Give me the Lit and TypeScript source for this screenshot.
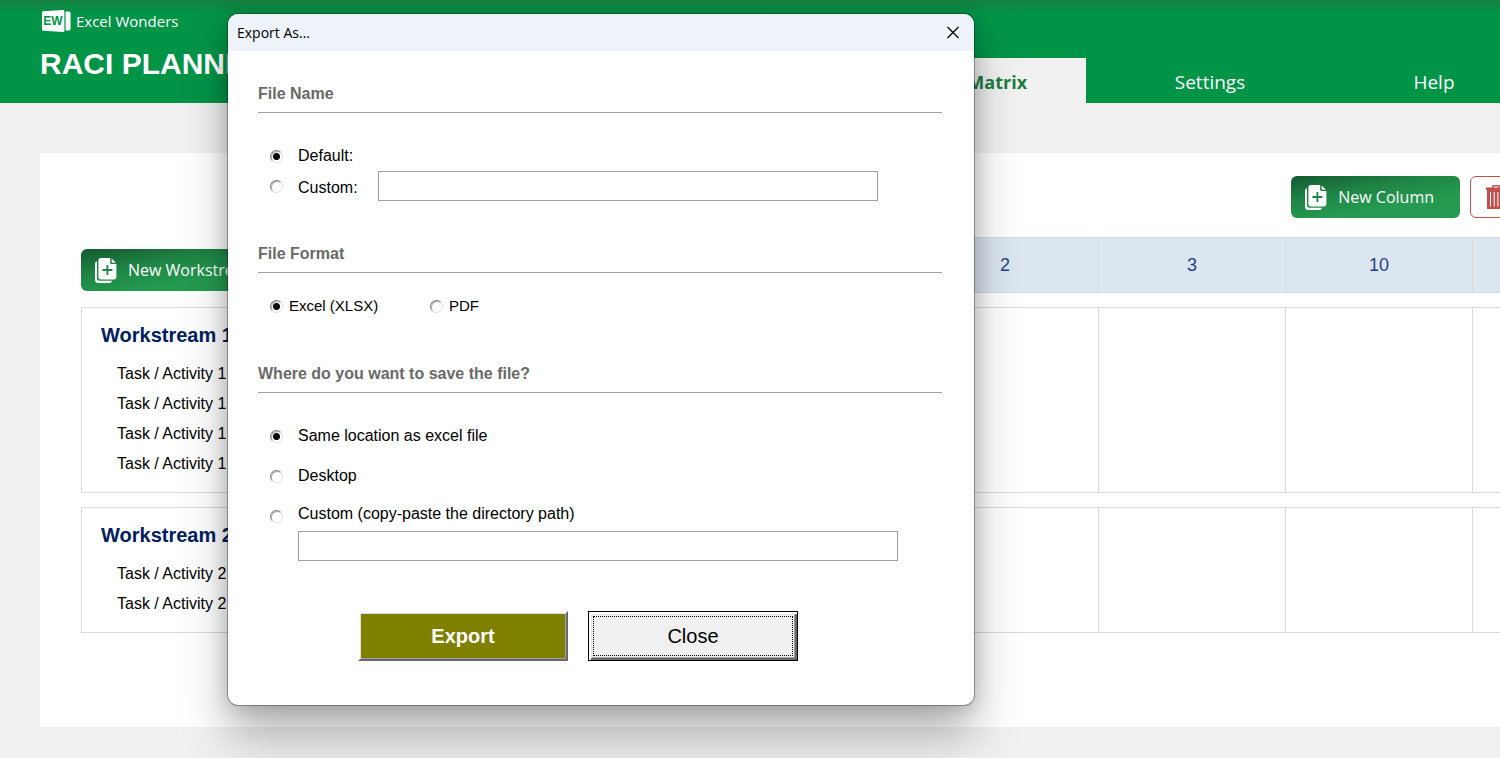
import { LitElement, html, css } from "lit";
import { customElement, state } from "lit/decorators.js";

interface Workstream {
  name: string;
  tasks: string[];
}

const columns = ["1", "2", "3", "10", ""];

const workstreams: Workstream[] = [
  {
    name: "Workstream 1",
    tasks: ["Task / Activity 1", "Task / Activity 1", "Task / Activity 1", "Task / Activity 1"],
  },
  { name: "Workstream 2", tasks: ["Task / Activity 2", "Task / Activity 2"] },
];

const addIcon = html`<svg viewBox="0 0 22 25" width="22" height="25" aria-hidden="true">
  <path fill="#fff" d="M0 5.500Q0 3.500 2 3.200V20.500Q2 22.800 4.400 22.800H17Q16.600 25 14.500 25H3.500Q0 25 0 21.500Z" />
  <path fill="#fff" d="M3.400 2.500Q3.400 0 6 0H15.200V4.800Q15.200 6 16.400 6H21.400V18.800Q21.400 21.400 18.800 21.400H6Q3.400 21.400 3.400 18.800Z" />
  <path fill="#fff" d="M16.600 0.600L20.900 4.700H17.400Q16.600 4.700 16.600 3.900Z" />
  <path stroke="#1d8443" stroke-width="1.800" d="M12.400 7V17M7.400 12H17.400" />
</svg>`;

@customElement("app-root")
export class AppRoot extends LitElement {
  @state() private naming = "default";
  @state() private format = "xlsx";
  @state() private location = "same";

  static styles = css`
    :host {
      display: block;
      position: relative;
      min-height: 100vh;
      overflow: hidden;
      background: #f1f1f1;
      color: #000;
      font-family: "Liberation Sans", Arial, sans-serif;
      font-size: 16px;
      line-height: 20px;
    }
    * {
      box-sizing: border-box;
    }
    .top {
      display: flex;
      height: 103px;
      background: linear-gradient(#17803f, #009447 14px);
      color: #fff;
    }
    .brand {
      flex: 0 0 862px;
      padding: 10px 0 0 40px;
    }
    .logo {
      display: flex;
      align-items: center;
      gap: 5px;
      height: 22px;
      padding-left: 1px;
      font: 15px/20px "Open Sans", "Noto Sans", sans-serif;
    }
    .title {
      margin: 14px 0 0;
      font-size: 30px;
      line-height: 36px;
    }
    .tabs {
      display: flex;
      align-items: flex-end;
    }
    .tab {
      flex: 0 0 224px;
      height: 45px;
      color: #fff;
      font: 19px/48px "Open Sans", "Noto Sans", sans-serif;
      text-align: center;
      text-decoration: none;
    }
    .tab.active {
      margin-right: 12px;
      background: #f1f1f1;
      color: #1d7c42;
      font-size: 18px;
      font-weight: 700;
    }
    .sheet {
      width: max-content;
      min-width: calc(100% - 40px);
      margin: 50px 0 31px 40px;
      padding: 23px 40px 94px 41px;
      background: #fff;
    }
    .inner {
      width: max-content;
    }
    .toolbar {
      display: flex;
      justify-content: flex-end;
      gap: 10px;
      margin-bottom: 19px;
    }
    .btn {
      display: flex;
      align-items: center;
      gap: 11px;
      height: 42px;
      padding: 0 26px 0 14px;
      border: 0;
      border-radius: 6px;
      background: linear-gradient(170deg, #14592f, #1f8545 35%, #24994f 65%);
      color: #fff;
      font: 16px/24px "Open Sans", "Noto Sans", sans-serif;
      white-space: nowrap;
    }
    .btn.danger {
      width: 190px;
      border: 1px solid #c0504d;
      background: #fff;
    }
    .matrix {
      border-collapse: separate;
      border-spacing: 0;
      table-layout: fixed;
      width: 1579px;
    }
    .matrix th,
    .matrix td {
      width: 187px;
      padding: 0;
      border: solid #d9d9d9;
      border-width: 1px 1px 1px 0;
    }
    .matrix .lead {
      width: 644px;
      padding-bottom: 2px;
      border: 0;
      vertical-align: bottom;
    }
    .matrix .col {
      height: 56px;
      background: #dce6f1;
      color: #1f4287;
      font-size: 18px;
      font-weight: 400;
    }
    .matrix .gap {
      height: 14px;
      border: 0;
    }
    .matrix .stream {
      padding: 14px 19px 13px;
      border-left-width: 1px;
      text-align: left;
      vertical-align: top;
      font-weight: 400;
    }
    .name {
      margin: 0 0 11px;
      color: #002060;
      font-size: 20px;
      line-height: 26px;
    }
    .tasks {
      margin: 0;
      padding: 0 0 0 16px;
      list-style: none;
      line-height: 30px;
    }
    .dialog {
      position: absolute;
      top: 14px;
      left: 228px;
      width: 746px;
      margin: 0;
      padding: 0;
      border: 0;
      border-radius: 10px;
      background: #fff;
      color: #000;
      box-shadow: 0 0 0 1px rgba(0, 0, 0, 0.3), 0 2px 20px rgba(0, 0, 0, 0.2), 0 32px 48px rgba(0, 0, 0, 0.28);
    }
    .bar {
      display: flex;
      align-items: center;
      justify-content: space-between;
      height: 37px;
      padding: 0 14px 0 9px;
      border-radius: 10px 10px 0 0;
      background: #eef3f9;
      font: 14px/20px "Open Sans", "Noto Sans", sans-serif;
    }
    .x {
      display: flex;
      padding: 0;
      border: 0;
      background: none;
    }
    .form {
      padding: 32px 32px 44px 30px;
    }
    .group {
      min-width: 0;
      margin: 0 0 42px;
      padding: 0;
      border: 0;
    }
    .group:last-of-type {
      margin-bottom: 50px;
    }
    .legend {
      width: 100%;
      height: 30px;
      margin-bottom: 28px;
      padding: 0;
      border-bottom: 1px solid #a0a0a0;
      color: #696969;
      font-size: 16px;
      font-weight: 700;
      line-height: 21px;
    }
    .legend.tight {
      margin-bottom: 18px;
    }
    .row {
      display: flex;
      align-items: center;
      height: 30px;
      padding-left: 12px;
    }
    .row.spaced {
      margin-bottom: 10px;
    }
    .option {
      display: flex;
      align-items: center;
      gap: 15px;
    }
    .option.wide {
      width: 108px;
    }
    .option.wide label {
      padding-top: 4px;
    }
    .option.raised label {
      padding-bottom: 4px;
    }
    .option.short {
      width: 160px;
      gap: 6px;
      font-size: 15px;
    }
    .radio {
      appearance: none;
      flex: none;
      width: 13px;
      height: 13px;
      margin: 0;
      border: 1px solid;
      border-color: #808080 #e3e3e3 #e3e3e3 #808080;
      border-radius: 50%;
      background: #fff;
      box-shadow: inset 1px 1px 0 #b4b4b4;
    }
    .radio:checked {
      background: radial-gradient(circle, #000 3px, #fff 4px);
    }
    .field {
      height: 30px;
      padding: 0 6px;
      border: 1px solid #a0a0a0;
      border-radius: 0;
      background: #fff;
      font: inherit;
    }
    .field.file {
      width: 500px;
    }
    .field.path {
      display: block;
      width: 600px;
      margin-left: 40px;
    }
    .actions {
      display: flex;
      gap: 20px;
      padding-left: 100px;
    }
    .push {
      width: 210px;
      height: 50px;
      padding: 0;
      border: 2px solid;
      border-color: #fff #696969 #696969 #fff;
      border-radius: 0;
      background: #808000;
      box-shadow: inset 1px 1px 0 #e3e3e3, inset -1px -1px 0 #a0a0a0;
      color: #fff;
      font: 700 20px/24px "Liberation Sans", Arial, sans-serif;
    }
    .push.plain {
      padding: 3px;
      border: 1px solid #000;
      background: #f0f0f0;
      box-shadow: inset 2px 2px 0 #fff, inset -2px -2px 0 #696969, inset 3px 3px 0 #e3e3e3, inset -3px -3px 0 #a0a0a0;
      color: #000;
      font-weight: 400;
    }
    .focus {
      display: grid;
      place-items: center;
      height: 40px;
      margin: 1px;
      border: 1px dotted #000;
    }
  `;

  private radio(id: string, group: "naming" | "format" | "location", value: string) {
    return html`<input
      class="radio"
      type="radio"
      id=${id}
      name=${group}
      .checked=${this[group] === value}
      @change=${() => (this[group] = value)}
    />`;
  }

  private renderStream(stream: Workstream) {
    return html`
      <tr>
        <td class="gap" colspan="6"></td>
      </tr>
      <tr>
        <th class="stream" scope="row">
          <h2 class="name">${stream.name}</h2>
          <ul class="tasks">
            ${stream.tasks.map((task) => html`<li>${task}</li>`)}
          </ul>
        </th>
        ${columns.map(() => html`<td></td>`)}
      </tr>
    `;
  }

  render() {
    return html`
      <header class="top">
        <div class="brand">
          <div class="logo">
            <svg viewBox="0 0 30 24" width="30" height="24" aria-hidden="true">
              <path fill="#fff" d="M1 3.500Q1 2.300 2.300 2.200L22 1Q23.400 1 23.400 2.300V21.700Q23.400 23 22 23L2.300 21.800Q1 21.700 1 20.500Z" />
              <path fill="#fff" d="M24.600 2.600H28Q29.600 2.600 29.600 4.200V19.800Q29.600 21.400 28 21.400H24.600Z" />
              <text x="12" y="16" text-anchor="middle" font-family="Liberation Sans" font-size="12" font-weight="700" fill="#009447">EW</text>
            </svg>
            <span>Excel Wonders</span>
          </div>
          <h1 class="title">RACI PLANNER</h1>
        </div>
        <nav class="tabs">
          <a class="tab active" href="#matrix">RACI Matrix</a>
          <a class="tab" href="#settings">Settings</a>
          <a class="tab" href="#help">Help</a>
        </nav>
      </header>

      <main class="sheet">
        <div class="inner">
          <div class="toolbar">
            <button class="btn" type="button">${addIcon}New Column</button>
            <button class="btn danger" type="button" aria-label="Delete column">
              <svg viewBox="0 0 22 25" width="22" height="25" aria-hidden="true">
                <path fill="#c0504d" d="M1 2.500H7V1.500Q7 0 8.500 0H13.500Q15 0 15 1.500V2.500H21V5H20V24H2V5H1ZM8.500 1.500V2.500H13.500V1.500Z" />
                <path stroke="#fff" stroke-width="1" d="M5.500 7V21.500M9.200 7V21.500M12.900 7V21.500M16.600 7V21.500" />
              </svg>
            </button>
          </div>
          <table class="matrix">
            <thead>
              <tr>
                <td class="lead"><button class="btn" type="button">${addIcon}New Workstream</button></td>
                ${columns.map((label) => html`<th class="col" scope="col">${label}</th>`)}
              </tr>
            </thead>
            <tbody>
              ${workstreams.map((stream) => this.renderStream(stream))}
            </tbody>
          </table>
        </div>
      </main>

      <dialog class="dialog" open aria-labelledby="dialog-title">
        <div class="bar">
          <span id="dialog-title">Export As...</span>
          <button class="x" type="button" aria-label="Close window">
            <svg viewBox="0 0 14 14" width="14" height="14" aria-hidden="true">
              <path stroke="#000" stroke-width="1.200" d="M1.500 1L12.500 12M12.500 1L1.500 12" />
            </svg>
          </button>
        </div>
        <form class="form">
          <fieldset class="group">
            <legend class="legend">File Name</legend>
            <div class="row">
              <span class="option">${this.radio("n-default", "naming", "default")}<label for="n-default">Default:</label></span>
            </div>
            <div class="row">
              <span class="option wide">${this.radio("n-custom", "naming", "custom")}<label for="n-custom">Custom:</label></span>
              <input class="field file" type="text" aria-label="Custom file name" />
            </div>
          </fieldset>
          <fieldset class="group">
            <legend class="legend tight">File Format</legend>
            <div class="row">
              <span class="option short">${this.radio("f-xlsx", "format", "xlsx")}<label for="f-xlsx">Excel (XLSX)</label></span>
              <span class="option short">${this.radio("f-pdf", "format", "pdf")}<label for="f-pdf">PDF</label></span>
            </div>
          </fieldset>
          <fieldset class="group">
            <legend class="legend">Where do you want to save the file?</legend>
            <div class="row spaced">
              <span class="option">${this.radio("l-same", "location", "same")}<label for="l-same">Same location as excel file</label></span>
            </div>
            <div class="row spaced">
              <span class="option">${this.radio("l-desktop", "location", "desktop")}<label for="l-desktop">Desktop</label></span>
            </div>
            <div class="row">
              <span class="option raised">${this.radio("l-custom", "location", "custom")}<label for="l-custom">Custom (copy-paste the directory path)</label></span>
            </div>
            <input class="field path" type="text" aria-label="Custom directory path" />
          </fieldset>
          <div class="actions">
            <button class="push" type="button">Export</button>
            <button class="push plain" type="button"><span class="focus">Close</span></button>
          </div>
        </form>
      </dialog>
    `;
  }
}
